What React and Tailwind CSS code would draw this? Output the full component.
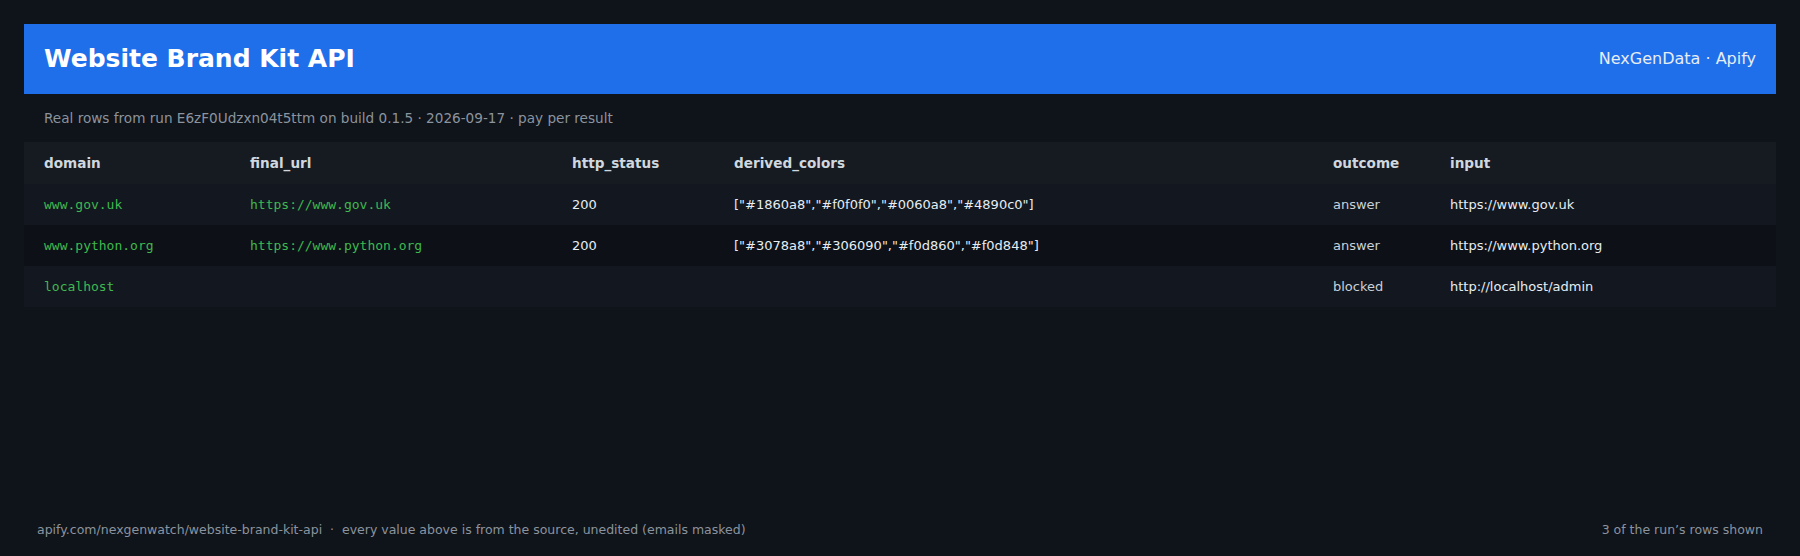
import React from "react";

const rows = [
  { domain: "www.gov.uk", final_url: "https://www.gov.uk", status: "200", colors: '["#1860a8","#f0f0f0","#0060a8","#4890c0"]', outcome: "answer", input: "https://www.gov.uk" },
  { domain: "www.python.org", final_url: "https://www.python.org", status: "200", colors: '["#3078a8","#306090","#f0d860","#f0d848"]', outcome: "answer", input: "https://www.python.org" },
  { domain: "localhost", final_url: "", status: "", colors: "", outcome: "blocked", input: "http://localhost/admin" },
];

const App = () => {
  return (
    <div className="h-[556px] w-full bg-[#0f131a] flex flex-col px-6 pt-6 font-['DejaVu_Sans',sans-serif]">
      <div className="h-[70px] bg-[#1f6feb] flex flex-row items-center justify-between px-5">
        <h1 className="text-[25px] font-bold text-white">Website Brand Kit API</h1>
        <div className="text-[16px] text-[#e6edf3]">NexGenData · Apify</div>
      </div>
      <div className="h-12 flex items-center px-5 text-[13.6px] text-[#8b949e]">
        Real rows from run E6zF0Udzxn04t5ttm on build 0.1.5 · 2026-09-17 · pay per result
      </div>
      <table className="w-full table-fixed border-collapse text-[13px] text-left">
        <colgroup>
          <col className="w-[226px]" />
          <col className="w-[322px]" />
          <col className="w-[162px]" />
          <col className="w-[599px]" />
          <col className="w-[117px]" />
          <col />
        </colgroup>
        <thead>
          <tr className="h-[42px] bg-[#161b22] text-[#d0d7de] text-[13.6px]">
            <th className="pl-5 font-bold">domain</th>
            <th className="font-bold">final_url</th>
            <th className="font-bold">http_status</th>
            <th className="font-bold">derived_colors</th>
            <th className="font-bold">outcome</th>
            <th className="font-bold">input</th>
          </tr>
        </thead>
        <tbody>
          {rows.map((r, i) => (
            <tr key={i} className={i === 1 ? "h-[41px] bg-[#0d1117]" : "h-[41px] bg-[#131820]"}>
              <td className="pl-5 font-['DejaVu_Sans_Mono',monospace] text-[#3fb950]">{r.domain}</td>
              <td className="font-['DejaVu_Sans_Mono',monospace] text-[#3fb950]">{r.final_url}</td>
              <td className="text-[#e6edf3]">{r.status}</td>
              <td className="text-[#e6edf3]">{r.colors}</td>
              <td className="text-[#c9d1d9]">{r.outcome}</td>
              <td className="text-[#e6edf3]">{r.input}</td>
            </tr>
          ))}
        </tbody>
      </table>
      <div className="mt-auto h-[52px] flex flex-row items-center justify-between px-[13px] pt-[1px] text-[12.5px] text-[#8b949e]">
        <span className="whitespace-pre">apify.com/nexgenwatch/website-brand-kit-api  ·  every value above is from the source, unedited (emails masked)</span>
        <span>3 of the run’s rows shown</span>
      </div>
    </div>
  );
};

export default App;
